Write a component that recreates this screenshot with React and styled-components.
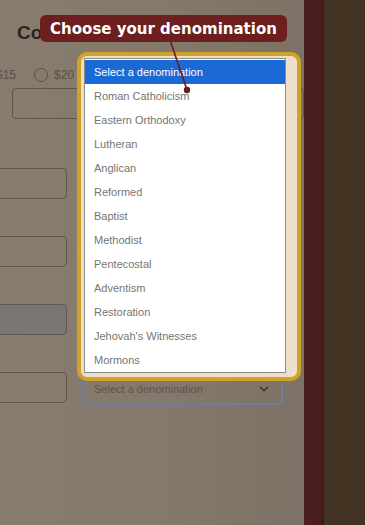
import React from 'react';
import styled, { createGlobalStyle } from 'styled-components';
import { ChevronDown } from 'lucide-react';

const GlobalStyle = createGlobalStyle`
  html, body {
    margin: 0;
    padding: 0;
    overflow: hidden;
  }
  body {
    font-family: "Liberation Sans", Arial, sans-serif;
  }
`;

const denominations = [
  'Roman Catholicism',
  'Eastern Orthodoxy',
  'Lutheran',
  'Anglican',
  'Reformed',
  'Baptist',
  'Methodist',
  'Pentecostal',
  'Adventism',
  'Restoration',
  "Jehovah's Witnesses",
  'Mormons',
];

// Whole window: dimmed form, maroon rail, brown side
const Shell = styled.div`
  display: flex;
  width: 365px;
  height: 525px;
`;

const Main = styled.main`
  position: relative;
  width: 304px;
  flex-shrink: 0;
  overflow: hidden;
  background: linear-gradient(90deg, #877c6e 0%, #837869 60%, #7c7265 100%);
  display: flex;
  flex-direction: column;
`;

const Rail = styled.div`
  width: 20px;
  flex-shrink: 0;
  background: linear-gradient(90deg, #4b1f1d 0%, #4a1d1c 85%, #3b1816 100%);
`;

const Side = styled.div`
  flex: 1;
  background: #433322;
`;

const Title = styled.h1`
  margin: 22px 0 0 17px;
  font-size: 19px;
  line-height: 22px;
  font-weight: 600;
  color: #2a2520;
  white-space: nowrap;
`;

const AmountRow = styled.div`
  display: flex;
  align-items: center;
  gap: 18px;
  margin: 23px 0 0 -24px;
  height: 15px;
`;

const Amount = styled.label`
  display: flex;
  align-items: center;
  gap: 6px;
  font-size: 12px;
  color: #5c4e44;
`;

const Radio = styled.span`
  width: 12px;
  height: 12px;
  border-radius: 50%;
  border: 1.5px solid #5a534a;
`;

const WideInput = styled.div`
  margin: 6px 0 0 12px;
  width: 290px;
  height: 29px;
  border: 1.5px solid #5d564d;
  border-radius: 4px;
`;

const FieldGrid = styled.div`
  display: grid;
  grid-template-columns: 87px 201px;
  grid-auto-rows: 32px;
  align-items: start;
  column-gap: 15px;
  row-gap: 36px;
  margin: 49px 0 0 -20px;
`;

const TextBox = styled.div`
  height: 29px;
  border: 1.5px solid #5f584f;
  border-radius: 4px;
  background: ${p => (p.$filled ? '#787774' : 'transparent')};
`;

const SelectBox = styled.div`
  display: flex;
  align-items: center;
  justify-content: space-between;
  height: 28px;
  margin-top: 1px;
  padding: 0 10px;
  border: 2px solid #6d7e9b;
  border-radius: 4px;
  font-size: 11px;
  color: #5d564d;
`;

// Spotlight around the open listbox
const Spotlight = styled.div`
  position: absolute;
  left: 77px;
  top: 52px;
  width: 213px;
  height: 319px;
  border: 4px solid #cfa22a;
  border-radius: 10px;
  background: #efdfca;
  padding: 2px 0 0 3px;
`;

const Listbox = styled.ul`
  list-style: none;
  margin: 0;
  padding: 1px 0 0;
  width: 200px;
  border: 1px solid #8c8c8c;
  background: #fff;
`;

const Option = styled.li`
  height: 24px;
  line-height: 24px;
  padding-left: 9px;
  font-size: 11px;
  color: ${p => (p.$active ? '#fff' : '#757575')};
  background: ${p => (p.$active ? '#1a69d5' : 'transparent')};
`;

const Tooltip = styled.div`
  position: absolute;
  left: 40px;
  top: 15px;
  width: 247px;
  height: 27px;
  border-radius: 6px;
  background: #6d1f1f;
  color: #fff;
  font-family: "DejaVu Sans", Verdana, sans-serif;
  font-weight: bold;
  font-size: 15px;
  display: flex;
  align-items: center;
  justify-content: center;
`;

const Connector = styled.svg`
  position: absolute;
  left: 0;
  top: 0;
  width: 304px;
  height: 525px;
  pointer-events: none;
`;

// rows of the form; only the last select is visible beneath the spotlight
const rows = [
  { filled: false, select: false },
  { filled: false, select: false },
  { filled: true, select: false },
  { filled: false, select: true },
];

const App = () => (
  <>
    <GlobalStyle />
    <Shell>
      <Main>
        <Title>Contribute</Title>
        <AmountRow>
          <Amount><Radio />$15</Amount>
          <Amount><Radio />$20</Amount>
        </AmountRow>
        <WideInput />
        <FieldGrid>
          {rows.map((row, i) => (
            <React.Fragment key={`row-${i}`}>
              <TextBox $filled={row.filled} />
              {row.select ? (
                <SelectBox>
                  Select a denomination
                  <ChevronDown size={14} strokeWidth={2.5} color="#3d3832" />
                </SelectBox>
              ) : (
                <div />
              )}
            </React.Fragment>
          ))}
        </FieldGrid>

        <Spotlight>
          <Listbox>
            <Option $active>Select a denomination</Option>
            {denominations.map(d => (
              <Option key={d}>{d}</Option>
            ))}
          </Listbox>
        </Spotlight>

        <Connector viewBox="0 0 304 525">
          <line x1="170" y1="40" x2="187" y2="90" stroke="#6a1c1c" strokeWidth="1.6" />
          <circle cx="187" cy="90" r="3.2" fill="#6a1c1c" />
        </Connector>

        <Tooltip>Choose your denomination</Tooltip>
      </Main>
      <Rail />
      <Side />
    </Shell>
  </>
);

export default App;
